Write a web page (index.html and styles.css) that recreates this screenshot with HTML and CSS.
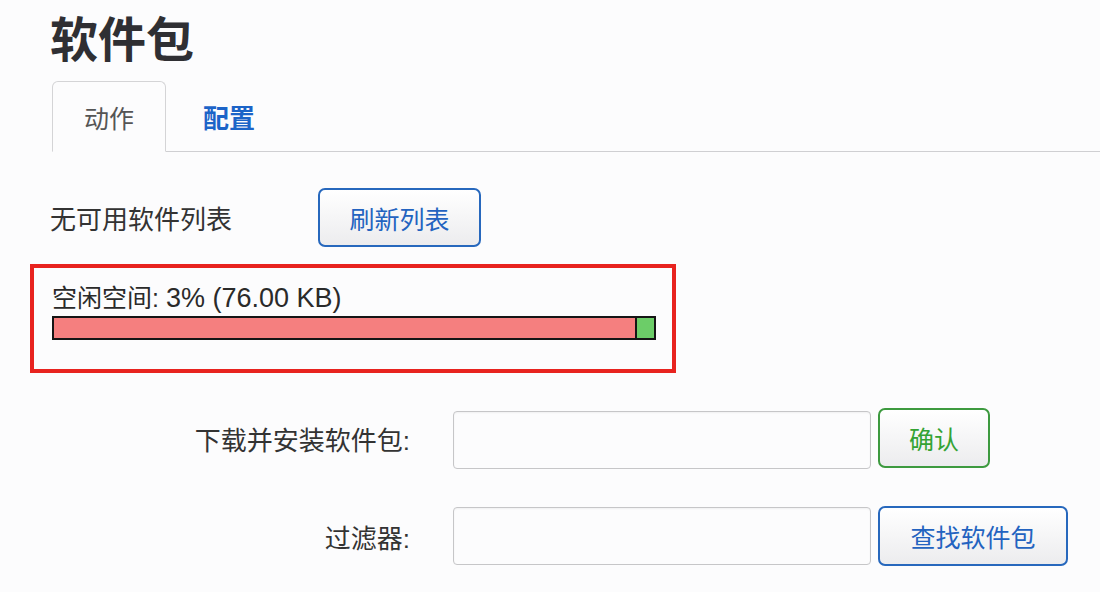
FILE: index.html
```html
<!DOCTYPE html>
<html lang="zh-CN">
<head>
<meta charset="utf-8">
<title>软件包</title>
<link rel="stylesheet" href="styles.css">
</head>
<body>
<div class="page">
  <h2 class="title">软件包</h2>
  <ul class="tabs">
    <li class="tab active">动作</li>
    <li class="tab"><a href="#">配置</a></li>
  </ul>
  <div class="list-row">
    <span class="list-label">无可用软件列表</span>
    <button class="btn btn-blue btn-refresh">刷新列表</button>
  </div>
  <div class="free-box">
    <div class="free-text">空闲空间: <span class="free-num">3% (76.00 KB)</span></div>
    <div class="bar">
      <div class="bar-used"></div>
      <div class="bar-free"></div>
    </div>
  </div>
  <div class="form-row first">
    <label class="form-label">下载并安装软件包:</label>
    <input class="form-input" type="text">
    <button class="btn btn-green btn-ok">确认</button>
  </div>
  <div class="form-row second">
    <label class="form-label">过滤器:</label>
    <input class="form-input" type="text">
    <button class="btn btn-blue btn-find">查找软件包</button>
  </div>
</div>
</body>
</html>
```

FILE: styles.css
```css
html, body {
  margin: 0;
  padding: 0;
  background: #fcfcfd;
}
body {
  font-family: "Liberation Sans", "Noto Sans CJK SC", sans-serif;
  color: #333;
  font-size: 26px;
}
.page {
  padding: 17px 0 0 52px;
}
.title {
  margin: 0;
  font-size: 48px;
  line-height: 48px;
  font-weight: 700;
  color: #2f2f33;
  margin-left: -2px;
}
.tabs {
  list-style: none;
  margin: 16px 0 0 0;
  padding: 0;
  display: flex;
  border-bottom: 1px solid #cfcfd2;
  height: 70px;
}
.tab {
  height: 70px;
  box-sizing: border-box;
  padding: 0 31px;
  display: flex;
  align-items: center;
  font-size: 25px;
  color: #555;
}
.tab.active {
  border: 1px solid #d4d4d6;
  border-bottom: 1px solid #fcfcfd;
  border-radius: 6px 6px 0 0;
  height: 71px;
  margin-bottom: -1px;
  background: #fcfcfd;
}
.tab a {
  color: #1c64c8;
  text-decoration: none;
  font-weight: 700;
  font-size: 26px;
  padding-left: 6px;
}
.list-row {
  display: flex;
  align-items: center;
  margin-top: 36px;
  margin-left: -2px;
}
.list-label {
  width: 268px;
  font-size: 26px;
  color: #333;
}
.btn {
  font-family: "Liberation Sans", "Noto Sans CJK SC", sans-serif;
  font-size: 25px;
  background: linear-gradient(#ffffff, #ececee);
  border-radius: 7px;
  border: 2px solid;
  padding: 0;
  cursor: pointer;
}
.btn-blue {
  border-color: #2768bd;
  color: #2363c0;
}
.btn-green {
  border-color: #3d9a3f;
  color: #34a334;
}
.btn-refresh {
  width: 163px;
  height: 59px;
}
.free-box {
  margin: 17px 0 0 -22px;
  width: 646px;
  box-sizing: border-box;
  border: 4px solid #e8231f;
  padding: 15px 16px 29px 18px;
}
.free-text {
  font-size: 25px;
  line-height: 30px;
  color: #2a2a2a;
}
.free-num {
  font-size: 27px;
}
.bar {
  margin-top: 3px;
  height: 24px;
  box-sizing: border-box;
  border: 2px solid #151515;
  display: flex;
  background: #f57f7f;
}
.bar-used {
  flex: 1;
  background: #f57f7f;
  border-right: 2px solid #151515;
}
.bar-free {
  width: 17px;
  background: #6ccd68;
}
.form-row {
  display: flex;
  align-items: center;
  height: 60px;
}
.form-row.first {
  margin-top: 35px;
}
.form-row.second {
  margin-top: 38px;
}
.form-label {
  width: 358px;
  text-align: right;
  margin-right: 43px;
  font-size: 26px;
  color: #333;
}
.form-input {
  width: 418px;
  height: 58px;
  box-sizing: border-box;
  border: 1px solid #c6c6c8;
  border-radius: 4px;
  background: #fcfcfd;
  box-shadow: inset 0 1px 2px rgba(0,0,0,0.05);
  margin: 0 7px 0 0;
  padding: 0 8px;
  font-size: 22px;
}
.first .form-input {
  margin-top: 3px;
}
.btn-ok {
  width: 112px;
  height: 60px;
}
.btn-find {
  width: 190px;
  height: 60px;
}
```
